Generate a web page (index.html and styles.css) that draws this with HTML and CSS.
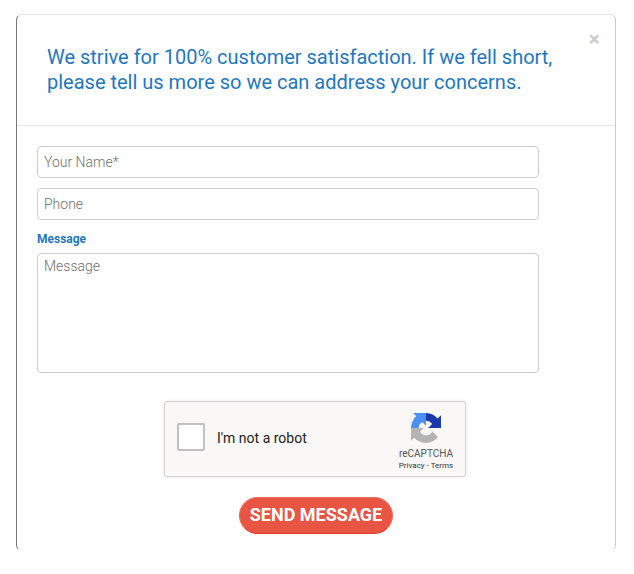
FILE: index.html
```html
<!DOCTYPE html>
<html lang="en">
<head>
    <meta charset="UTF-8">
    <meta name="viewport" content="width=device-width, initial-scale=1.0">
    <title>Contact Us</title>
    <link rel="stylesheet" href="styles.css">
</head>
<body>
    <div class="modal">
        <div class="modal-header">
            <h4>We strive for 100% customer satisfaction. If we fell short, please tell us more so we can address your concerns.</h4>
            <button type="button" class="close" aria-label="Close">&times;</button>
        </div>

        <form class="modal-body">
            <input type="text" name="name" placeholder="Your Name*">
            <input type="text" name="phone" placeholder="Phone">
            <label for="message">Message</label>
            <textarea id="message" name="message" placeholder="Message"></textarea>

            <!-- Captcha -->
            <div class="captcha">
                <span class="captcha-box"></span>
                <span class="captcha-label">I'm not a robot</span>
                <div class="captcha-brand">
                    <svg width="30" height="30" viewBox="0 0 64 64">
                        <path d="M64 31.955l-.033-1.37V4.687l-7.16 7.16C50.948 4.674 42.033.093 32.05.093c-10.4 0-19.622 4.96-25.458 12.64l11.736 11.86a15.55 15.55 0 0 1 4.754-5.334c2.05-1.6 4.952-2.906 8.968-2.906.485 0 .86.057 1.135.163 4.976.393 9.288 3.14 11.828 7.124l-8.307 8.307L64 31.953" fill="#1c3aa9"/>
                        <path d="M31.862.094l-1.37.033H4.594l7.16 7.16C4.58 13.147 0 22.06 0 32.046c0 10.4 4.96 19.622 12.64 25.458L24.5 45.768a15.55 15.55 0 0 1-5.334-4.754c-1.6-2.05-2.906-4.952-2.906-8.968 0-.485.057-.86.163-1.135.393-4.976 3.14-9.288 7.124-11.828l8.307 8.307L31.86.095" fill="#4a90f5"/>
                        <path d="M.001 32.045l.033 1.37v25.898l7.16-7.16c5.86 7.173 14.774 11.754 24.76 11.754 10.4 0 19.622-4.96 25.458-12.64l-11.736-11.86a15.55 15.55 0 0 1-4.754 5.334c-2.05 1.6-4.952 2.906-8.968 2.906-.485 0-.86-.057-1.135-.163-4.976-.393-9.288-3.14-11.828-7.124l8.307-8.307c-10.522.04-22.4.066-27.295-.005" fill="#b4b4b4"/>
                    </svg>
                    <div class="captcha-name">reCAPTCHA</div>
                    <div class="captcha-links">Privacy - Terms</div>
                </div>
            </div>

            <button type="submit" class="send-button">SEND MESSAGE</button>
        </form>
    </div>
</body>
</html>
```
FILE: styles.css
```css
* {
    box-sizing: border-box;
}

body {
    margin: 0;
    padding: 14px 18px 0 16px;
    background: #fefefe;
    font-family: Roboto, Arial, sans-serif;
}

.modal {
    width: 600px;
    height: 537px;
    border: 1px solid #e5e5e5;
    border-left-color: #777;
    border-right-color: #ccc;
    border-bottom-color: transparent;
    border-radius: 6px;
}

.modal-header {
    display: flex;
    justify-content: space-between;
    height: 111px;
    padding: 30px 15px 0 30px;
    border-bottom: 1px solid #e5e5e5;
}

.modal-header h4 {
    width: 520px;
    margin: 0;
    font-size: 20px;
    font-weight: 400;
    line-height: 25px;
    color: #1f78bf;
}

.close {
    height: 21px;
    margin-top: -16px;
    padding: 0;
    border: 0;
    background: none;
    font-family: Roboto, Arial, sans-serif;
    font-size: 21px;
    font-weight: 700;
    line-height: 21px;
    color: #ccc;
}

.modal-body {
    display: flex;
    flex-direction: column;
    padding: 20px 20px 0;
}

.modal-body input,
.modal-body textarea {
    width: 502px;
    border: 1px solid #ccc;
    border-radius: 4px;
    background: #fff;
    font-family: Roboto, Arial, sans-serif;
    font-size: 14px;
    font-weight: 300;
}

.modal-body input {
    height: 32px;
    margin-bottom: 10px;
    padding: 0 6px;
}

.modal-body textarea {
    height: 120px;
    padding: 4px 6px;
    resize: none;
}

.modal-body ::placeholder {
    color: #707070;
}

.modal-body label {
    margin: 1px 0 6px;
    font-size: 12px;
    font-weight: 700;
    line-height: 16px;
    color: #1f78bf;
}

.captcha {
    display: flex;
    align-items: center;
    width: 302px;
    height: 76px;
    margin: 28px 0 0 127px;
    padding: 0 11px 0 12px;
    border: 1px solid #d3d3d3;
    border-radius: 3px;
    background: #f9f8f7;
    box-shadow: 0 0 3px rgba(0, 0, 0, 0.1);
}

.captcha-box {
    width: 28px;
    height: 28px;
    margin-top: -5px;
    border: 2px solid #c1c1c1;
    border-radius: 2px;
    background: #fff;
}

.captcha-label {
    margin: -3px auto 0 12px;
    font-size: 14px;
    color: #222;
}

.captcha-brand {
    width: 56px;
    height: 52px;
    text-align: center;
    color: #555;
}

.captcha-brand svg {
    display: block;
    margin: 0 auto;
}

.captcha-name {
    margin-top: 5px;
    font-size: 10px;
    line-height: 12px;
}

.captcha-links {
    font-size: 8px;
    line-height: 12px;
    color: #333;
}

.send-button {
    width: 154px;
    height: 37px;
    margin: 20px 0 0 202px;
    padding: 0 0 3px;
    border: 1px solid #ec6f60;
    border-bottom-color: #e43a28;
    border-radius: 19px;
    background: #e85543;
    font-family: Roboto, Arial, sans-serif;
    font-size: 18px;
    font-weight: 700;
    color: #fff;
    white-space: nowrap;
}
```
